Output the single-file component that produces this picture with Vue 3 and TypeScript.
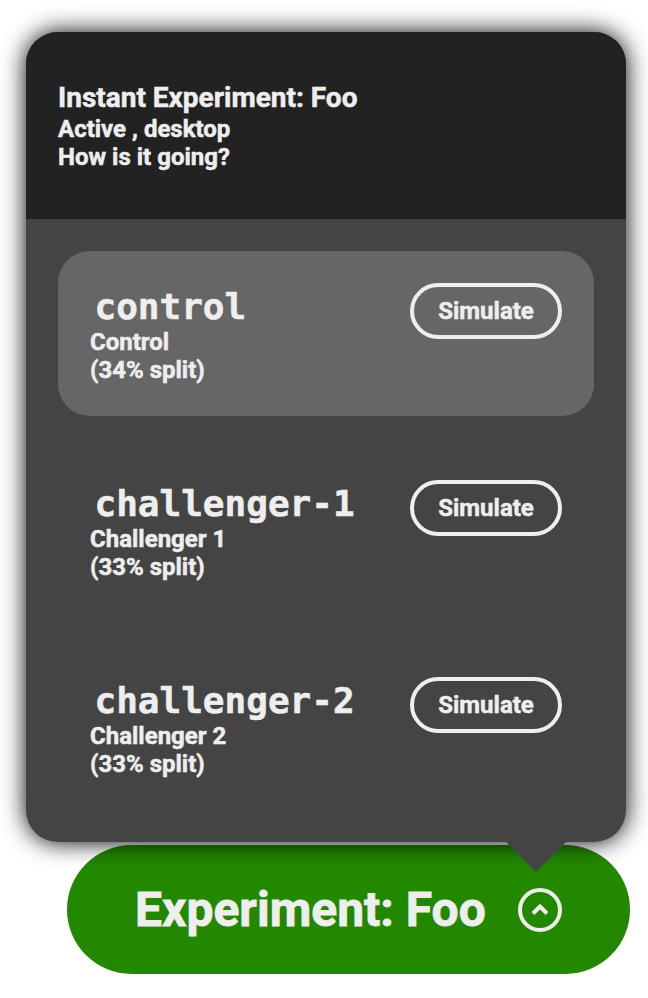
<script setup lang="ts">
interface Variant {
  slug: string
  name: string
  split: number
  active: boolean
}

const variants: Variant[] = [
  { slug: 'control', name: 'Control', split: 34, active: true },
  { slug: 'challenger-1', name: 'Challenger 1', split: 33, active: false },
  { slug: 'challenger-2', name: 'Challenger 2', split: 33, active: false },
]
</script>

<template>
  <main class="stage">
    <section class="popup">
      <header class="head">
        <div class="title">Instant Experiment: Foo</div>
        <div>Active , desktop</div>
        <div>How is it going?</div>
      </header>
      <div class="body">
        <article v-for="v in variants" :key="v.slug" class="variant" :class="{ selected: v.active }">
          <div class="info">
            <code class="slug">{{ v.slug }}</code>
            <div>{{ v.name }}</div>
            <div>({{ v.split }}% split)</div>
          </div>
          <button class="simulate">Simulate</button>
        </article>
      </div>
      <span class="arrow"></span>
    </section>
    <button class="pill">
      <span class="label">Experiment: Foo</span>
      <span class="toggle">
        <svg width="20" height="20" viewBox="0 0 20 20"><path d="M3 13.5 L10 6.5 L17 13.5" /></svg>
      </span>
    </button>
  </main>
</template>

<style>
body {
  background: #fff;
}
</style>

<style scoped>
.stage {
  box-sizing: border-box;
  width: 648px;
  height: 998px;
  padding: 32px 18px 0 26px;
  overflow: hidden;
  display: flex;
  flex-direction: column;
  font-family: Roboto, sans-serif;
  font-weight: 700;
  font-size: 24px;
  line-height: 28px;
  color: #eee;
  -webkit-text-stroke: 0.5px #eee;
}
.popup {
  position: relative;
  z-index: 1;
  width: 600px;
  height: 810px;
  border-radius: 32px;
  background: #444;
  box-shadow: 0 0 25px #000;
}
.head {
  box-sizing: border-box;
  height: 187px;
  padding: 49px 32px 0;
  border-radius: 32px 32px 0 0;
  background: #222;
}
.title {
  font-size: 28px;
  line-height: 33px;
  padding-bottom: 1px;
}
.body {
  display: flex;
  flex-direction: column;
  gap: 32px;
  padding: 32px;
}
.variant {
  box-sizing: border-box;
  height: 165px;
  padding: 32px;
  border-radius: 32px;
  display: flex;
  justify-content: space-between;
  align-items: flex-start;
}
.selected {
  background: #666;
}
.slug {
  display: block;
  padding: 2px 0 0 4.5px;
  font: 700 36px/43px "DejaVu Sans Mono", monospace;
}
.simulate {
  box-sizing: border-box;
  width: 152px;
  height: 56px;
  padding: 0;
  border: 4px solid #eee;
  border-radius: 28px;
  background: transparent;
  color: inherit;
  font: inherit;
}
.arrow {
  position: absolute;
  left: 479px;
  top: 809px;
  width: 62px;
  height: 31px;
  background: #444;
  clip-path: polygon(0 0, 100% 0, 50% 100%);
}
.pill {
  align-self: flex-end;
  flex: none;
  box-sizing: border-box;
  width: 563px;
  height: 129px;
  margin: 3px 0 0;
  padding: 0 68px;
  border: 0;
  border-radius: 65px;
  background: #280;
  color: inherit;
  font: 700 48px/56px Roboto, sans-serif;
  display: flex;
  align-items: center;
  justify-content: space-between;
}
.label {
  white-space: nowrap;
  -webkit-text-stroke: 0.8px #eee;
}
.toggle {
  box-sizing: border-box;
  width: 44px;
  height: 44px;
  border: 4px solid #eee;
  border-radius: 50%;
  display: flex;
  align-items: center;
  justify-content: center;
}
.toggle path {
  fill: none;
  stroke: #eee;
  stroke-width: 4;
}
</style>
